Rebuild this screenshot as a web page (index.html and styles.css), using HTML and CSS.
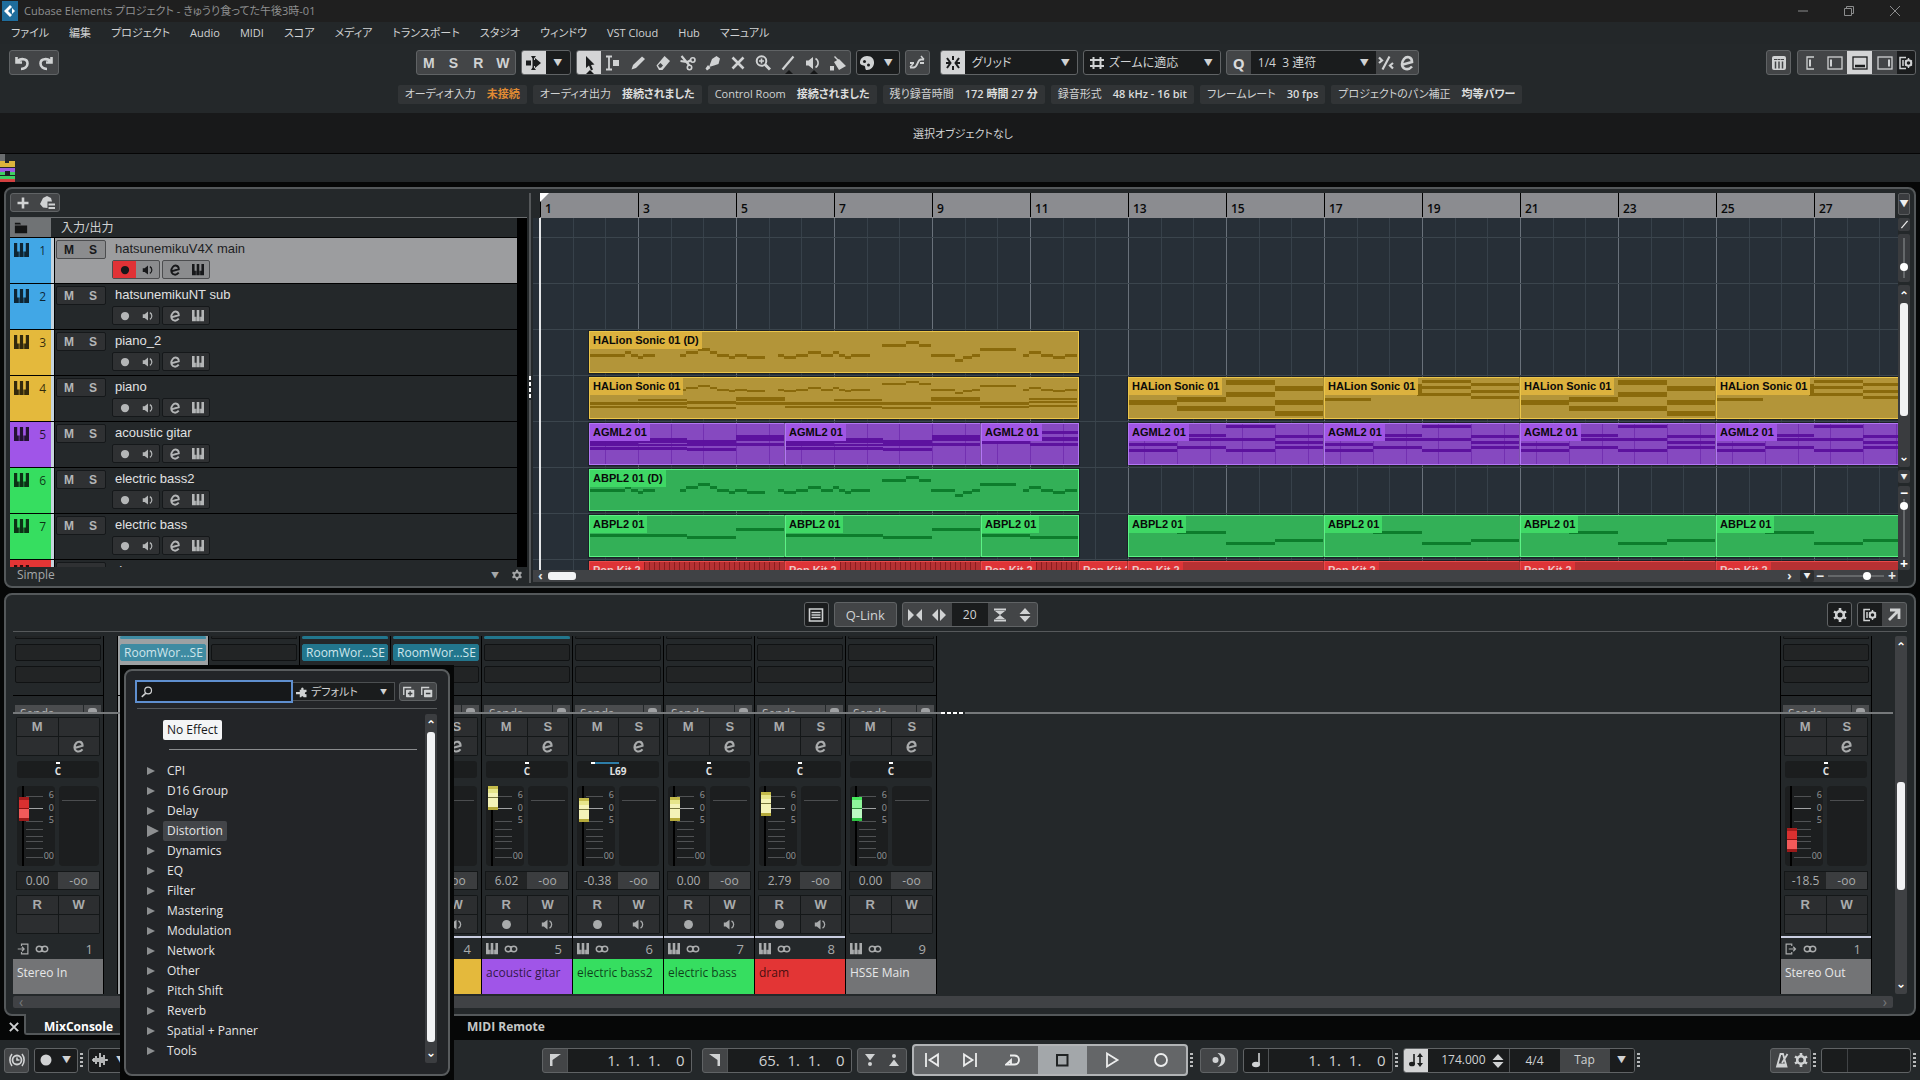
FILE: index.html
```html
<!DOCTYPE html>
<html lang="ja">
<head>
<meta charset="utf-8">
<title>Cubase Elements プロジェクト - きゅうり食ってた午後3時-01</title>
<link rel="stylesheet" href="styles.css">
</head>
<body>
<svg class="sprite" aria-hidden="true">
  <symbol id="i-undo" viewBox="0 0 16 16"><path d="M2.500 2v5.500H8M3 7C6 3 13.500 3 13.500 8.500c0 3.500-3 5.500-6.500 5.500" fill="none" stroke="currentColor" stroke-width="2.600"/></symbol>
  <symbol id="i-redo" viewBox="0 0 16 16"><path d="M13.500 2v5.500H8M13 7C10 3 2.500 3 2.500 8.500c0 3.500 3 5.500 6.500 5.500" fill="none" stroke="currentColor" stroke-width="2.600"/></symbol>
  <symbol id="i-auto" viewBox="0 0 16 16"><path d="M0 5.500h5v5H0zM9 5V3l6 5-6 5v-2H8V5zM5 1h5L8 3.500v9L10 15H5l1.500-2.500v-9z" fill="currentColor"/></symbol>
  <symbol id="i-arrow" viewBox="0 0 16 16"><path d="M5 1v12l3-2.500 2 5 2-1-2-4.500 3.500-.5z" fill="currentColor"/></symbol>
  <symbol id="i-range" viewBox="0 0 16 16"><path d="M1 1.500h6M4 1.500v13M1 14.500h6" stroke="currentColor" stroke-width="1.800" fill="none"/><path d="M8 5h6v6H8z" fill="currentColor"/></symbol>
  <symbol id="i-pencil" viewBox="0 0 16 16"><path d="M1.500 14.500l1.500-4.500L12 1.500l3 2.500L6 13z" fill="currentColor"/></symbol>
  <symbol id="i-eraser" viewBox="0 0 16 16"><path d="M1.500 10.500L9.500 1l5.500 5L7.500 15H4z" fill="currentColor"/><path d="M3 10.500l2.500-2.500 2.500 2.500-2 2.300H4.500z" fill="#434547"/></symbol>
  <symbol id="i-scissors" viewBox="0 0 16 16"><path d="M1.500 1l5 6 3 3.500M.5 6l7 1 3.500-2" fill="none" stroke="currentColor" stroke-width="2.200"/><circle cx="12.800" cy="5" r="2.200" fill="none" stroke="currentColor" stroke-width="1.600"/><circle cx="9.500" cy="12.500" r="2.200" fill="none" stroke="currentColor" stroke-width="1.600"/></symbol>
  <symbol id="i-glue" viewBox="0 0 16 16"><path d="M7 4l4.500-3L15 3.500 13.500 9 9 10.500 4 12zM3 10l2.500 3L2 15.500.5 13.500z" fill="currentColor"/></symbol>
  <symbol id="i-x" viewBox="0 0 16 16"><path d="M2.500 2.500l11 11M13.500 2.500l-11 11" stroke="currentColor" stroke-width="2.600"/></symbol>
  <symbol id="i-zoom" viewBox="0 0 16 16"><circle cx="6.500" cy="6" r="4.800" fill="none" stroke="currentColor" stroke-width="2"/><path d="M10 9.500l5 5" stroke="currentColor" stroke-width="3"/><path d="M4 6h5M6.500 3.500v5" stroke="currentColor" stroke-width="1.600"/></symbol>
  <symbol id="i-line" viewBox="0 0 16 16"><path d="M2.500 14.500L13.500 1.500" stroke="currentColor" stroke-width="2.200"/></symbol>
  <symbol id="i-speaker" viewBox="0 0 16 16"><path d="M1 5.500h2.500L8 2v12l-4.500-3.500H1z" fill="currentColor"/><path d="M10.500 3.500c3.500 2 3.500 7 0 9" stroke="currentColor" stroke-width="1.600" fill="none"/></symbol>
  <symbol id="i-paint" viewBox="0 0 16 16"><path d="M4 7l5-3 7 7-7 4zM0 11h4v4.500H0zM5 1l5 5-1 1-5-5z" fill="currentColor"/></symbol>
  <symbol id="i-palette" viewBox="0 0 16 16"><path d="M8 1c5 0 7.500 3.500 7 7.500-.5 3.500-3 6.500-7 6.500-2 0-1.500-2-2-3.500C6 10 1.500 11 1 8 .7 4 4 1 8 1z" fill="currentColor"/><circle cx="5.500" cy="6.500" r="1.500" fill="#1b1d1e"/><circle cx="9.500" cy="10" r="1.500" fill="#1b1d1e"/></symbol>
  <symbol id="i-cross" viewBox="0 0 16 16"><path d="M1 12.500h3.500C9 12.500 8 4.500 12 4.500h3M1 8h4M11 8h4" fill="none" stroke="currentColor" stroke-width="1.800"/><path d="M12 1l3 3.500M1 12l3-3" stroke="currentColor" stroke-width="1.500"/></symbol>
  <symbol id="i-snap" viewBox="0 0 16 16"><path d="M8 1v4M8 11v4M2 3l3.500 5L2 13M14 3l-3.500 5 3.500 5M1 8h4M11 8h4" fill="none" stroke="currentColor" stroke-width="2"/></symbol>
  <symbol id="i-hash" viewBox="0 0 16 16"><path d="M4.500 2v12M11.500 2v12M1 5h14M1 11h14" stroke="currentColor" stroke-width="2"/></symbol>
  <symbol id="i-iq" viewBox="0 0 16 16"><path d="M4.500 14.500L11.500 1.500M1 2.500L4 5.500 1 8M15 8L12 10.500l3 3" fill="none" stroke="currentColor" stroke-width="2.200"/></symbol>
  <symbol id="i-edit" viewBox="0 0 16 16"><path d="M3 9.800L13 7c0-5.500-5.500-6-8-3s-2.800 7.500.2 9.300 6 .2 7.800-1.800" fill="none" stroke="currentColor" stroke-width="2.600"/></symbol>
  <symbol id="i-keys" viewBox="0 0 14 14"><path d="M0 0h3v8h1.500v5H0zM5.500 0h3v8H9v5H5v-5h.5zM11 0h3v13H9.500V8H11z" fill="currentColor"/></symbol>
  <symbol id="i-mixer" viewBox="0 0 16 16"><rect x="1" y="1" width="14" height="14" rx="2" fill="currentColor"/><path d="M4.500 6.500v7M8 6.500v7M11.500 6.500v7" stroke="#434547" stroke-width="1.500"/><path d="M3 4.500h3M6.500 4.500h3M10 4.500h3" stroke="#434547"/></symbol>
  <symbol id="i-zl0" viewBox="0 0 16 16"><path d="M12 2H5v12h7" fill="none" stroke="currentColor" stroke-width="1.300"/><path d="M8 4.500v7" stroke="currentColor" stroke-width="2"/></symbol>
  <symbol id="i-zl" viewBox="0 0 16 16"><rect x="1" y="2" width="14" height="12" fill="none" stroke="currentColor" stroke-width="1.300"/><path d="M4 4.500v7" stroke="currentColor" stroke-width="2"/></symbol>
  <symbol id="i-zb" viewBox="0 0 16 16"><rect x="1" y="2" width="14" height="12" fill="none" stroke="currentColor" stroke-width="1.300"/><path d="M3 11h10" stroke="currentColor" stroke-width="2.500"/></symbol>
  <symbol id="i-zr" viewBox="0 0 16 16"><rect x="1" y="2" width="14" height="12" fill="none" stroke="currentColor" stroke-width="1.300"/><path d="M12 4.500v7" stroke="currentColor" stroke-width="2"/></symbol>
  <symbol id="i-setup" viewBox="0 0 16 16"><path d="M8 2.500H2v11h6M5 5v6" fill="none" stroke="currentColor" stroke-width="1.500"/><circle cx="10.500" cy="8" r="2.800" fill="none" stroke="currentColor" stroke-width="2"/><path d="M10.500 3v2M10.500 11v2M14 5.500l-1.500 1M14 10.500l-1.500-1M7 5.500l1.500 1M7 10.500l1.500-1" stroke="currentColor" stroke-width="1.400"/></symbol>
  <symbol id="i-gear" viewBox="0 0 16 16"><circle cx="8" cy="8" r="3.800" fill="none" stroke="currentColor" stroke-width="2.600"/><path d="M8 1v3M8 12v3M2 4.500L4.500 6M14 4.500L11.500 6M2 11.500L4.500 10M14 11.500L11.500 10" stroke="currentColor" stroke-width="2.600"/></symbol>
  <symbol id="i-out" viewBox="0 0 16 16"><path d="M4 3h9v9M13 3L3 13" fill="none" stroke="currentColor" stroke-width="2.800"/></symbol>
  <symbol id="i-plus" viewBox="0 0 16 16"><path d="M8 2.500v11M2.500 8h11" stroke="currentColor" stroke-width="2.600"/></symbol>
  <symbol id="i-preset" viewBox="0 0 16 16"><path d="M4 3l4-2 4 2 1 3.500H8.500V13L4 12.500 1 9zM9.500 8.500H16v2H9.500zM9.500 12H16v2H9.500z" fill="currentColor"/></symbol>
  <symbol id="i-folder" viewBox="0 0 16 14"><path d="M1 1h6l1 2H1zM1 4h14v9H1z" fill="currentColor"/></symbol>
  <symbol id="i-list" viewBox="0 0 16 16"><path d="M1.500 2h13v12h-13zM3.500 5.500h9M3.500 8h9M3.500 10.500h9" fill="none" stroke="currentColor" stroke-width="1.600"/></symbol>
  <symbol id="i-narrow" viewBox="0 0 16 16"><path d="M1 2l6 6-6 6zM15 2L9 8l6 6z" fill="currentColor"/></symbol>
  <symbol id="i-wide" viewBox="0 0 16 16"><path d="M7 2L1 8l6 6zM9 2l6 6-6 6z" fill="currentColor"/></symbol>
  <symbol id="i-short" viewBox="0 0 16 16"><path d="M2 1.500h12v2H2zM3 4h10L8 8zM3 12h10L8 8zM2 12.500h12v2H2z" fill="currentColor"/></symbol>
  <symbol id="i-tall" viewBox="0 0 16 16"><path d="M2.500 7L8 1l5.500 6zM2.500 9L8 15l5.500-6z" fill="currentColor"/></symbol>
  <symbol id="i-inf" viewBox="0 0 16 16"><path d="M8 4.500v7M8 8c0-4-6.500-4.500-6.500 0S8 12 8 8zM8 8c0-4 6.500-4.500 6.500 0S8 12 8 8z" fill="none" stroke="currentColor" stroke-width="1.800"/></symbol>
  <symbol id="i-in" viewBox="0 0 16 16"><path d="M6 4V1.500h8.500v13H6V12M1 8h8M6.500 5l3 3-3 3" fill="none" stroke="currentColor" stroke-width="1.600"/></symbol>
  <symbol id="i-outp" viewBox="0 0 16 16"><path d="M9 4V1.500H1.500v13H9V12M5 8h9M11 5l3 3-3 3" fill="none" stroke="currentColor" stroke-width="1.600"/></symbol>
  <symbol id="i-dot" viewBox="0 0 16 16"><circle cx="8" cy="8" r="5.500" fill="currentColor"/></symbol>
  <symbol id="i-search" viewBox="0 0 16 16"><circle cx="9.500" cy="6" r="4.500" fill="none" stroke="currentColor" stroke-width="1.600"/><path d="M6.500 9.500L1 14.500" stroke="currentColor" stroke-width="2"/></symbol>
  <symbol id="i-puzzle" viewBox="0 0 16 16"><path d="M5 5h2c-1-4 4-4 3 0h4v3c-3-1-3 4 0 3v4h-4c0-2-3-2-3 0H5v-4H0V8h5z" fill="currentColor"/></symbol>
  <symbol id="i-expand" viewBox="0 0 16 16"><path d="M1 12V2h10" fill="none" stroke="currentColor" stroke-width="1.800"/><rect x="4" y="5" width="11" height="10" rx="1" fill="currentColor"/><path d="M9.500 7v6M6.500 10h6" stroke="#3b3d3f" stroke-width="1.800"/></symbol>
  <symbol id="i-collapse" viewBox="0 0 16 16"><path d="M1 12V2h10" fill="none" stroke="currentColor" stroke-width="1.800"/><rect x="4" y="5" width="11" height="10" rx="1" fill="currentColor"/><path d="M6.500 10h6" stroke="#3b3d3f" stroke-width="1.800"/></symbol>
  <symbol id="i-clock" viewBox="0 0 16 16"><circle cx="8" cy="8" r="4.500" fill="none" stroke="currentColor" stroke-width="1.800"/><path d="M8 5.500V8h2.500M3 2C.2 5.500.2 10.500 3 14M13 2c2.800 3.500 2.800 8.500 0 12" fill="none" stroke="currentColor" stroke-width="1.600"/></symbol>
  <symbol id="i-wave" viewBox="0 0 16 16"><path d="M0 8h2V6v4M4 4v8M6 6v4M8 1v14M10 5v6M12 3v10M14 7v2M14 8h2" fill="none" stroke="currentColor" stroke-width="1.700"/></symbol>
  <symbol id="i-locl" viewBox="0 0 16 16"><path d="M3 2h11L5.500 8v6H3z" fill="currentColor"/></symbol>
  <symbol id="i-locr" viewBox="0 0 16 16"><path d="M13 2H2l8.500 6v6H13z" fill="currentColor"/></symbol>
  <symbol id="i-pin" viewBox="0 0 16 16"><path d="M3 2h10L8 8.500z" fill="currentColor"/><circle cx="8" cy="12" r="2" fill="currentColor"/></symbol>
  <symbol id="i-pout" viewBox="0 0 16 16"><path d="M3 14h10L8 7.500z" fill="currentColor"/><circle cx="8" cy="4" r="2" fill="currentColor"/></symbol>
  <symbol id="i-prev" viewBox="0 0 16 16"><path d="M2 1v14M14 2.500v11L5.500 8z" fill="none" stroke="currentColor" stroke-width="1.800"/></symbol>
  <symbol id="i-next" viewBox="0 0 16 16"><path d="M14 1v14M2 2.500v11L10.500 8z" fill="none" stroke="currentColor" stroke-width="1.800"/></symbol>
  <symbol id="i-cycle" viewBox="0 0 16 16"><path d="M5 3.500h4.500c6 0 6 9 0 9H1l5-4.500v4" fill="none" stroke="currentColor" stroke-width="1.800"/></symbol>
  <symbol id="i-stop" viewBox="0 0 16 16"><path d="M3 3h10.500v10.500H3z" fill="none" stroke="currentColor" stroke-width="2"/></symbol>
  <symbol id="i-play" viewBox="0 0 16 16"><path d="M3 1.500v13L13.500 8z" fill="none" stroke="currentColor" stroke-width="1.800"/></symbol>
  <symbol id="i-rec" viewBox="0 0 16 16"><circle cx="8" cy="8" r="6" fill="none" stroke="currentColor" stroke-width="1.800"/></symbol>
  <symbol id="i-moon" viewBox="0 0 16 16"><circle cx="4.500" cy="8" r="3" fill="currentColor"/><path d="M6.500 1c10-.5 10.500 13 0 14 5-4 5-10 0-14z" fill="currentColor"/></symbol>
  <symbol id="i-note" viewBox="0 0 16 16"><path d="M11 1v11" stroke="currentColor" stroke-width="1.600"/><ellipse cx="8" cy="12.500" rx="4" ry="2.800" fill="currentColor"/></symbol>
  <symbol id="i-tempo" viewBox="0 0 16 16"><path d="M6 2v10" stroke="currentColor" stroke-width="1.600"/><ellipse cx="4" cy="12" rx="3" ry="2.300" fill="currentColor"/><path d="M12 3v10" stroke="currentColor" stroke-width="1.600"/><path d="M9 5l3-4 3 4zM9 11l3 4 3-4z" fill="currentColor"/></symbol>
  <symbol id="i-metro" viewBox="0 0 16 16"><path d="M6.500 2h2.500L12.500 14.500H3zM8 11l5.500-9" fill="none" stroke="currentColor" stroke-width="1.800"/><path d="M4 11.500h8l.8 3H3z" fill="currentColor"/></symbol>
</svg>

<div class="app">
  <header>
    <div class="titlebar">
      <svg class="logo" viewBox="0 0 16 20"><rect width="16" height="20" fill="#1f6d9c"/><path d="M2 10l6-6 2 2-4 4 4 4-2 2z" fill="#fff"/><path d="M10 7l3 3-3 3z" fill="#fff"/></svg>
      <span class="title">Cubase Elements プロジェクト - きゅうり食ってた午後3時-01</span>
      <button class="win" aria-label="最小化"><svg viewBox="0 0 12 12"><path d="M1 6h10" stroke="currentColor"/></svg></button>
      <button class="win" aria-label="元に戻す"><svg viewBox="0 0 12 12"><path d="M1.500 3.500h7v7h-7zM3.500 3V1.500h7v7H9" fill="none" stroke="currentColor"/></svg></button>
      <button class="win" aria-label="閉じる"><svg viewBox="0 0 12 12"><path d="M1 1l10 10M11 1L1 11" stroke="currentColor"/></svg></button>
    </div>
    <nav class="menubar">
      <a href="#">ファイル</a><a href="#">編集</a><a href="#">プロジェクト</a><a href="#">Audio</a><a href="#">MIDI</a><a href="#">スコア</a><a href="#">メディア</a><a href="#">トランスポート</a><a href="#">スタジオ</a><a href="#">ウィンドウ</a><a href="#">VST Cloud</a><a href="#">Hub</a><a href="#">マニュアル</a>
    </nav>
    <div class="toolbar">
      <div class="group history">
        <button aria-label="Undo"><svg><use href="#i-undo"/></svg></button><button aria-label="Redo"><svg><use href="#i-redo"/></svg></button>
      </div>
      <div class="tools">
        <div class="group letters"><button>M</button><button>S</button><button>R</button><button>W</button></div>
        <div class="group"><button class="on" aria-label="Auto-Scroll"><svg><use href="#i-auto"/></svg></button><button class="dark caret">▼</button></div>
        <div class="group">
          <button class="on sub" aria-label="Select"><svg><use href="#i-arrow"/></svg></button>
          <button aria-label="Range"><svg><use href="#i-range"/></svg></button>
          <button aria-label="Draw"><svg><use href="#i-pencil"/></svg></button>
          <button aria-label="Erase"><svg><use href="#i-eraser"/></svg></button>
          <button aria-label="Split"><svg><use href="#i-scissors"/></svg></button>
          <button aria-label="Glue"><svg><use href="#i-glue"/></svg></button>
          <button aria-label="Mute"><svg><use href="#i-x"/></svg></button>
          <button aria-label="Zoom"><svg><use href="#i-zoom"/></svg></button>
          <button class="sub" aria-label="Line"><svg><use href="#i-line"/></svg></button>
          <button class="sub" aria-label="Play"><svg><use href="#i-speaker"/></svg></button>
          <button aria-label="Color"><svg><use href="#i-paint"/></svg></button>
        </div>
        <div class="group"><button class="dark fit" aria-label="Color Menu"><svg><use href="#i-palette"/></svg></button><button class="dark caret fit">▼</button></div>
        <div class="group"><button aria-label="Crossfade"><svg><use href="#i-cross"/></svg></button></div>
        <div class="group snap"><button class="on" aria-label="Snap"><svg><use href="#i-snap"/></svg></button>
          <span class="drop w112"><select aria-label="Snap Type"><option>グリッド</option></select></span></div>
        <div class="group dark"><svg class="lead"><use href="#i-hash"/></svg><span class="drop w112"><select aria-label="Grid Type"><option>ズームに適応</option></select></span></div>
        <div class="group"><button class="q">Q</button><span class="drop w125"><select aria-label="Quantize Preset"><option>1/4&nbsp; 3 連符</option></select></span><button class="fit" aria-label="Iterative Quantize"><svg><use href="#i-iq"/></svg></button><button class="fit" aria-label="Quantize Panel"><svg><use href="#i-edit"/></svg></button></div>
      </div>
      <div class="zones">
        <div class="group"><button aria-label="MixConsole"><svg><use href="#i-mixer"/></svg></button></div>
        <div class="group"><button aria-label="Left Zone"><svg><use href="#i-zl0"/></svg></button><button aria-label="Inspector"><svg><use href="#i-zl"/></svg></button><button class="on" aria-label="Lower Zone"><svg><use href="#i-zb"/></svg></button><button aria-label="Right Zone"><svg><use href="#i-zr"/></svg></button><button class="dark slim" aria-label="Setup"><svg><use href="#i-setup"/></svg></button></div>
      </div>
    </div>
    <div class="status">
      <p>オーディオ入力<b class="warn">未接続</b></p>
      <p>オーディオ出力<b>接続されました</b></p>
      <p>Control Room<b>接続されました</b></p>
      <p>残り録音時間<b>172 時間 27 分</b></p>
      <p>録音形式<b>48 kHz - 16 bit</b></p>
      <p>フレームレート<b>30 fps</b></p>
      <p>プロジェクトのパン補正<b>均等パワー</b></p>
    </div>
    <div class="infoline">選択オブジェクトなし</div>
    <div class="overview"><svg width="15" height="28" viewBox="0 0 15 28"><path d="M0 0h5v8H0z" fill="#6a6d6f"/><path d="M0 7h5v2h4V7h6v6H0z" fill="#dcb43c"/><path d="M0 14h15v4H0z" fill="#9a5be0"/><path d="M0 18h15v9H0z" fill="#3fcf62"/><path d="M5 17h5v4H5zM0 21h15v1H0z" fill="#1c2023"/><path d="M0 25h15v3H0z" fill="#d24040"/></svg></div>
  </header>

  <main class="panel project">
    <section class="tracklist">
      <div class="tl-head"><div class="group small"><button aria-label="Add Track"><svg><use href="#i-plus"/></svg></button><button aria-label="Track Presets"><svg><use href="#i-preset"/></svg></button></div></div>
      <div class="tl-body">
        <div class="io"><span class="io-icon"><svg><use href="#i-folder"/></svg></span>入力/出力</div>
        <div id="tracks"></div>
      </div>
      <div class="tl-foot"><span>Simple</span><span class="foot-caret">▼</span><svg><use href="#i-gear"/></svg></div>
    </section>
    <div class="vsplit"></div>
    <section class="arrange">
      <div class="ruler" id="ruler"></div>
      <div class="canvas" id="canvas"></div>
      <div class="hbar"><span class="chev">‹</span><span class="thumb"></span><span class="chev end">›</span><button class="mini">▼</button><span class="hzoom"><i>−</i><input type="range" aria-label="Horizontal Zoom" min="0" max="100" value="72"><i>+</i></span></div>
    </section>
    <div class="vbar">
      <button class="mini tall">▼</button>
      <button class="mini" aria-label="Edit"><svg><use href="#i-line"/></svg></button>
      <div class="box wave"><input type="range" class="vert" aria-label="Waveform Zoom" min="0" max="100" value="23"></div>
      <div class="box scroll"><span>⌃</span><i></i><span class="dn">⌃</span></div>
      <button class="mini">▼</button>
      <div class="box vzoom"><b>−</b><input type="range" class="vert" aria-label="Vertical Zoom" min="0" max="100" value="94"><b>+</b></div>
    </div>
  </main>

  <section class="panel mixer">
    <div class="mx-head">
      <div class="group"><button class="dark" aria-label="Channel List"><svg><use href="#i-list"/></svg></button></div>
      <div class="group"><button class="qlink">Q-Link</button></div>
      <div class="group"><button aria-label="Narrower"><svg><use href="#i-narrow"/></svg></button><button aria-label="Wider"><svg><use href="#i-wide"/></svg></button><span class="num">20</span><button aria-label="Shorter"><svg><use href="#i-short"/></svg></button><button aria-label="Taller"><svg><use href="#i-tall"/></svg></button></div>
      <div class="mx-right"><div class="group"><button class="dark" aria-label="Settings"><svg><use href="#i-gear"/></svg></button></div><div class="group"><button class="dark" aria-label="Setup"><svg><use href="#i-setup"/></svg></button><button aria-label="Open Window"><svg><use href="#i-out"/></svg></button></div></div>
    </div>
    <div class="mx-body">
      <div class="channels" id="channels"></div>
      <div class="mx-vscroll"><span>⌃</span><i></i><span class="dn">⌃</span></div>
    </div>
    <div class="mx-hscroll"><span>‹</span><span>›</span></div>
  </section>
  <nav class="tabs">
    <button class="close" aria-label="閉じる"><svg><use href="#i-x"/></svg></button>
    <a href="#" class="tab active">MixConsole</a>
    <a href="#" class="tab">MIDI Remote</a>
  </nav>

  <footer class="transport">
    <div class="t-left">
      <div class="group"><button aria-label="Buffer"><svg><use href="#i-clock"/></svg></button></div>
      <div class="group"><button class="dark fit" aria-label="Record Mode"><svg><use href="#i-dot"/></svg></button><button class="dark caret fit">▼</button></div>
      <span class="dots"></span>
      <div class="group"><button class="dark fit" aria-label="Audio Record"><svg><use href="#i-wave"/></svg></button><button class="dark caret fit">▼</button></div>
    </div>
    <div class="t-mid">
      <div class="group loc"><button aria-label="Left Locator"><svg><use href="#i-locl"/></svg></button><input aria-label="Left Locator Position" value="1.  1.  1.    0"></div>
      <div class="group loc second"><button aria-label="Right Locator"><svg><use href="#i-locr"/></svg></button><input aria-label="Right Locator Position" value="65.  1.  1.    0"></div>
      <div class="group"><button aria-label="Punch In"><svg><use href="#i-pin"/></svg></button><button aria-label="Punch Out"><svg><use href="#i-pout"/></svg></button></div>
      <div class="main-t"><button class="s" aria-label="Previous"><svg><use href="#i-prev"/></svg></button><button class="s" aria-label="Next"><svg><use href="#i-next"/></svg></button><button aria-label="Cycle"><svg><use href="#i-cycle"/></svg></button><button class="stop" aria-label="Stop"><svg><use href="#i-stop"/></svg></button><button aria-label="Start"><svg><use href="#i-play"/></svg></button><button aria-label="Record"><svg><use href="#i-rec"/></svg></button></div>
      <span class="dots"></span>
      <div class="group moon"><button aria-label="Pre-roll"><svg><use href="#i-moon"/></svg></button></div>
      <div class="group loc"><button class="dark" aria-label="Time Format"><svg><use href="#i-note"/></svg></button><input aria-label="Position" value="1.  1.  1.    0"></div>
      <span class="dots"></span>
      <div class="group tempo"><button class="on" aria-label="Tempo Track"><svg><use href="#i-tempo"/></svg></button><input aria-label="Tempo" value="174.000"><span class="step"><svg><use href="#i-tall"/></svg></span><span class="sig">4/4</span><button class="tap">Tap</button><button class="dark caret">▼</button></div>
      <span class="dots"></span>
    </div>
    <div class="t-right">
      <div class="group"><button class="fit" aria-label="Metronome"><svg><use href="#i-metro"/></svg></button><button class="slim" aria-label="Metronome Setup"><svg><use href="#i-gear"/></svg></button></div>
      <span class="dots"></span>
      <div class="group meter"><span></span></div>
      <span class="dots"></span>
    </div>
  </footer>

  <div class="popup">
    <div class="pop-inner">
      <div class="pop-head">
        <label class="search"><svg><use href="#i-search"/></svg><input type="text" aria-label="検索"></label>
        <span class="drop preset"><svg><use href="#i-puzzle"/></svg><select aria-label="コレクション"><option>デフォルト</option></select></span>
        <div class="group small"><button aria-label="展開"><svg><use href="#i-expand"/></svg></button><button aria-label="折りたたむ"><svg><use href="#i-collapse"/></svg></button></div>
      </div>
      <div class="pop-body">
        <div class="pop-list">
          <button class="none">No Effect</button>
          <hr>
          <ul>
            <li><span>CPI</span></li><li><span>D16 Group</span></li><li><span>Delay</span></li><li class="hover"><span>Distortion</span></li><li><span>Dynamics</span></li><li><span>EQ</span></li><li><span>Filter</span></li><li><span>Mastering</span></li><li><span>Modulation</span></li><li><span>Network</span></li><li><span>Other</span></li><li><span>Pitch Shift</span></li><li><span>Reverb</span></li><li><span>Spatial + Panner</span></li><li><span>Tools</span></li>
          </ul>
        </div>
        <div class="pop-scroll"><span>⌃</span><i></i><span class="dn">⌃</span></div>
      </div>
    </div>
  </div>
</div>
<script src="script.js"></script>
</body>
</html>
```

FILE: styles.css
```css
* { box-sizing: border-box; }
html, body { margin: 0; height: 100%; }
body {
  background: #060707;
  color: #d0d2d3;
  font: 12px/16px "Open Sans", "Noto Sans CJK JP", sans-serif;
  font-feature-settings: "palt";
  overflow: hidden;
}
button, input, select { font: inherit; font-feature-settings: inherit; color: inherit; background: none; border: 0; padding: 0; margin: 0; outline: 0; }
a { color: inherit; text-decoration: none; }
p, ul { margin: 0; padding: 0; }
i { font-style: normal; }
svg { display: block; width: 16px; height: 16px; flex: none; }
.sprite { position: absolute; width: 0; height: 0; }

.app { position: relative; height: 100vh; display: flex; flex-direction: column; }

/* title and menu */
.titlebar { display: flex; align-items: center; height: 22px; background: #1f1f1f; padding: 0 2px; color: #8e8f90; }
.logo { width: 16px; height: 20px; }
.title { flex: 1; margin-left: 6px; font-size: 11px; }
.win { width: 46px; display: flex; justify-content: center; color: #8b8c8d; }
.win svg { width: 12px; height: 12px; }
.menubar { display: flex; align-items: center; gap: 20px; height: 22px; padding: 0 11px; background: #232729; font-size: 11px; }

/* shared button groups */
.group { display: flex; height: 25px; border: 1px solid #606365; border-radius: 3px; background: #434547; overflow: hidden; flex: none; }
.group.small { height: 19px; }
.group button { width: 25px; display: flex; align-items: center; justify-content: center; position: relative; }
.group > button:first-child, .group > button:last-child { width: 24px; }
.group button:only-child { width: 23px; }
.group button.fit { width: 21px; }
.group button.slim { width: 18px; }
.group svg { width: 16px; height: 16px; }
.group .dark, .group.dark { background: #1a1c1d; }
.group .on { background: #d3d4d5; color: #1b1d1e; }
.caret, .group button.caret { font-size: 9px; }
.sub::after { content: ""; position: absolute; bottom: 0; left: 9px; border: 4px solid transparent; border-top: 0; border-bottom-color: #151617; }
.letters { font: bold 14px/16px "Liberation Sans", sans-serif; }
.drop { display: flex; align-items: center; position: relative; background: #1a1c1d; }
.drop select { appearance: none; width: 100%; height: 100%; padding: 0 22px 0 7px; font-size: 12px; }
.drop::after { content: "▼"; position: absolute; right: 7px; font-size: 9px; pointer-events: none; }
.w112 { width: 112px; }
.w125 { width: 125px; }
.lead { margin: 4px 0 4px 5px; }
.lead + .drop { width: 115px; }
.lead + .drop select { padding-left: 4px; }

.toolbar { display: grid; grid-template-columns: 9fr auto 11fr; padding: 6px 4px 6px 9px; background: #24282a; }
.toolbar > .history { width: 50px; }
.tools { display: flex; gap: 5px; }
.snap { margin-left: 5px; }
.group button.q { font: bold 15px/16px "Open Sans", sans-serif; color: #d9dadb; }
.zones { display: flex; gap: 6px; justify-content: flex-end; }

.status { display: flex; justify-content: center; gap: 6px; height: 32px; padding-top: 4px; background: #24282a; font-size: 11px; }
.status p { height: 19px; line-height: 18px; background: #313436; padding: 0 7px; border-radius: 2px; white-space: nowrap; }
.status b { margin-left: 11px; font-weight: 600; color: #dcdddd; }
.status .warn { color: #e08a33; }
.infoline { height: 41px; line-height: 41px; text-align: center; background: #18191a; border-bottom: 1px solid #050505; font-size: 11px; padding-left: 6px; }
.overview { height: 28px; background: #24282a; margin-bottom: 5px; }
.overview svg { width: 15px; height: 28px; }

.panel { margin: 0 4px; border: 2px solid #54585a; border-radius: 8px; background: #24282a; }

/* project zone */
.project { flex: 1; min-height: 0; display: flex; padding: 4px 4px 3px 4px; margin-bottom: 5px; }
.tracklist { width: 517px; display: flex; flex-direction: column; min-height: 0; }
.tl-head { height: 25px; border-bottom: 1px solid #6b6e70; flex: none; }
.tl-head .group { width: 50px; }
.tl-body { flex: 1; min-height: 0; overflow: hidden; border-right: 10px solid #000; }
.io { display: flex; height: 20px; border-bottom: 1px solid #000; line-height: 19px; }
.io-icon { width: 41px; padding: 3px 4px; margin-right: 10px; background: #707375; color: #141515; }
.io-icon svg { width: 14px; height: 14px; }
.track { display: flex; height: 46px; border-bottom: 1px solid #000; }
.strip { width: 44px; border-right: 3px solid #c5d3dc; padding: 5px 5px 0 4px; display: flex; justify-content: space-between; color: rgba(0,0,0,.78); }
.strip svg { width: 15px; height: 15px; }
.track-main { flex: 1; border-left: 1px solid #000; display: grid; grid-template-columns: 59px auto 1fr; grid-template-rows: 20px 20px; align-content: start; padding: 2px 0 0 1px; }
.tname { grid-column: 2 / 4; font: 13px/18px "Liberation Sans", sans-serif; color: #e0e1e2; }
.pair { display: flex; width: 50px; height: 19px; border: 1px solid #15181a; border-radius: 2px; background: #2f3133; }
.pair button { flex: 1; display: flex; align-items: center; justify-content: center; font: bold 12px/16px "Liberation Sans", sans-serif; color: #b4b6b7; }
.pair svg { width: 12px; height: 12px; }
.pairs { grid-column: 2; display: flex; gap: 2px; margin-left: -3px; }
.pairs .pair { width: 48px; }
.track.sel .track-main { background: #9c9d9f; }
.track.sel .tname { color: #1d1e1f; }
.track.sel .pair { background: #8b8c8e; border-color: #4c4d4f; }
.track.sel .pair button { color: #17181a; }
.track.sel .armed { background: #e03236; }
.tl-foot { height: 16px; display: flex; align-items: center; padding: 0 4px 0 7px; gap: 12px; color: #a5a7a8; flex: none; }
.tl-foot span:first-child { flex: 1; }
.tl-foot svg { width: 12px; height: 12px; }
.foot-caret { font-size: 8px; }
.vsplit { width: 4px; border-right: 2px solid #55585a; margin-right: 2px; display: flex; align-items: center; position: relative; }
.vsplit::after { content: ""; position: absolute; right: -2px; width: 2px; height: 24px; background: repeating-linear-gradient(#fff 0 4px, #24282a 4px 6px); }
.arrange { flex: 1; min-width: 0; display: flex; flex-direction: column; }
.ruler { position: relative; height: 25px; margin-left: 7px; margin-right: 3px; overflow: hidden; background: #8b8c90; flex: none; }
.ruler span { position: absolute; bottom: 1px; height: 24px; border-left: 1px solid #000; padding: 8px 0 0 4px; color: #08090a; font-weight: 600; }
.ruler::before { content: ""; position: absolute; z-index: 1; border-top: 9px solid #fff; border-right: 9px solid transparent; }
.canvas { position: relative; flex: 1; overflow: hidden; background: repeating-linear-gradient(#0000 0 19px, #3b454d 19px 20px, #0000 20px 46px) 0 0 / 100% 46px, linear-gradient(90deg, #69717a 1px, #0000 1px 33px, #37414a 33px 34px, #0000 34px 65px, #37414a 65px 66px, #0000 66px) 7px 0 / 98px 100%, #272f37; }
.canvas::before { content: ""; position: absolute; z-index: 2; left: 6px; top: 0; bottom: 0; width: 2px; background: #e4e6e8; }
.clip { position: absolute; height: 42px; border: 1px solid; overflow: hidden; box-shadow: 0 0 0 1px rgba(0,0,0,.3); }
.clip svg { position: absolute; inset: -1px; width: 600px; height: 42px; }
.clip span { position: relative; display: inline-block; height: 17px; padding: 0 3px; font: bold 11px/17px "Liberation Sans", sans-serif; color: #0a0a0a; white-space: nowrap; }
.gold { background: #b39539; border-color: #ecc64a; color: #8a6a0c; }
.gold span { background: #dcb23e; }
.purple { background: #8649c0; border-color: #b377f4; color: #5d129f; }
.purple span { background: #a055e4; }
.purple .beat { opacity: .45; }
.green { background: #33b057; border-color: #5bf385; color: #0d7d2c; }
.green span { background: #3fd865; }
.red { background: #b73133; border-color: #ea4a4a; color: #8d1c1e; }
.clip.red span { background: #de3437; color: #eec6c6; }
.hbar { height: 12px; margin-bottom: 1px; display: flex; align-items: center; background: #404245; color: #e6e7e8; flex: none; }
.chev { width: 15px; text-align: center; font-weight: bold; line-height: 10px; }
.thumb { width: 28px; height: 8px; border-radius: 3px; background: #f2f3f4; }
.chev.end { margin-left: auto; }
.mini { height: 13px; width: 12px; display: flex; align-items: center; justify-content: center; background: #3a3c3f; border-radius: 2px; font-size: 7px; color: #eee; flex: none; }
.mini svg { width: 9px; height: 9px; }
.hbar .mini { margin-left: 3px; width: 14px; height: 12px; background: #2c2e30; }
.hzoom { display: flex; align-items: center; width: 84px; font-weight: bold; font-size: 14px; line-height: 12px; padding: 0 2px; gap: 4px; }
.hzoom input { flex: 1; min-width: 0; }
input[type=range] { appearance: none; background: linear-gradient(#65686a, #65686a) center / 100% 2px no-repeat; height: 9px; }
input[type=range]::-webkit-slider-thumb { appearance: none; width: 8px; height: 8px; border-radius: 4px; background: #fff; }
input.vert { writing-mode: vertical-lr; direction: rtl; width: 9px; height: auto; background: linear-gradient(#65686a, #65686a) center / 2px 100% no-repeat; }
.vbar { width: 12px; display: flex; flex-direction: column; gap: 3px; padding-bottom: 13px; }
.mini.tall { height: 22px; border: 1px solid #5a5c5e; font-size: 9px; }
.box { background: #3a3c3f; border-radius: 2px; display: flex; flex-direction: column; align-items: center; }
.box.wave { height: 48px; padding: 4px 0; }
.box.scroll { flex: 1; min-height: 0; }
.box.vzoom { height: 84px; line-height: 13px; font-size: 14px; color: #fff; }
.box input { flex: 1; min-height: 0; }
.scroll i, .mx-vscroll i, .pop-scroll i { width: 8px; border-radius: 3px; background: #f1f2f4; }
.scroll i { height: 62%; }
.scroll span, .mx-vscroll span, .pop-scroll span { height: 18px; font: bold 12px/22px "DejaVu Sans", sans-serif; color: #fff; }
.scroll .dn, .mx-vscroll .dn, .pop-scroll .dn { transform: rotate(180deg); margin-top: auto; }

/* mix console */
.mixer { padding: 7px 7px 6px; }
.mx-head { display: flex; gap: 5px; height: 30px; padding-left: 41.75%; border-bottom: 1px solid #56595b; }
.mx-right { display: flex; gap: 5px; margin-left: auto; }
.group button.qlink { width: 61px; font-size: 13px; }
.num { width: 36px; background: #1a1c1d; text-align: center; line-height: 23px; font-size: 12px; }
.mx-body { display: flex; gap: 2px; margin-top: 4px; height: 358px; }
.channels { position: relative; flex: 1; min-width: 0; display: flex; overflow: hidden; }
.channels::before { content: ""; position: absolute; left: 0; right: 0; top: 76px; height: 2px; background: #76797b; z-index: 2; }
.channels::after { content: ""; position: absolute; left: 50%; margin-left: -12px; top: 76px; width: 24px; height: 2px; background: repeating-linear-gradient(90deg, #fff 0 4px, #24282a 4px 6px); z-index: 3; }
.mx-vscroll { width: 12px; background: #3f4144; border-radius: 2px; display: flex; flex-direction: column; align-items: center; }
.mx-vscroll i { height: 108px; margin-top: 128px; }
.ch { width: 91px; flex: none; border-right: 1px solid #000; display: flex; flex-direction: column; background: #24282a; }
.ch.first { margin-right: 13px; }
.ch.lead-edge { border-left: 1px solid #000; width: 92px; }
.ch.last { margin-left: auto; margin-right: 21px; border-left: 1px solid #000; width: 92px; }
.ch.sel { background: #9da1a3; }
.inserts { height: 60px; padding: 0 2px; border-bottom: 1px solid #000; flex: none; }
.slot { height: 17px; margin-bottom: 5px; border: 1px solid #101213; border-radius: 2px; background: #222425; padding: 0 3px; line-height: 16px; color: #cfe6ec; white-space: nowrap; overflow: hidden; }
.slot.cut { height: 3px; border-top: 0; }
.slot.fx { background: #22768d; border-color: #22768d; }
.ch.sel .slot.fx { background: #3f8ba2; border-color: #3f8ba2; }
.sends { height: 7px; margin: 9px 2px 5px; display: flex; gap: 1px; overflow: hidden; flex: none; }
.sends span { background: #4a4c4e; padding-left: 5px; flex: 1; line-height: 18px; color: #b4b6b7; }
.sends i { width: 17px; background: #4a4c4e; padding: 3px 4px 0; }
.sends i::before { content: ""; display: block; height: 8px; border-radius: 3px; background: #9fa1a3; }
.cells { display: grid; grid-template-columns: 1fr 1fr; grid-auto-rows: 18px; gap: 1px; height: 39px; margin: 0 3px; padding: 1px; background: #141718; border-radius: 2px; flex: none; }
.cells button, .cells span { background: #2c2e30; display: flex; align-items: center; justify-content: center; font: bold 13px/16px "Liberation Sans", sans-serif; color: #a9abac; }
.cells svg { width: 13px; height: 13px; }
.pan { height: 17px; margin: 5px 4px 8px; border-radius: 3px; background: #1b1d1e; text-align: center; font: bold 10px/20px "Open Sans", sans-serif; color: #e0e1e2; position: relative; flex: none; }
.pan::before { content: ""; position: absolute; top: 1px; left: 50%; margin-left: -2px; width: 4px; height: 2px; background: #fff; }
.pan.left::before { left: 14px; margin: 0; width: 28px; background: linear-gradient(90deg, #fff 4px, #2d7da8 4px); }
.fader { display: flex; gap: 4px; height: 80px; margin: 0 4px 5px; flex: none; }
.fbox { position: relative; width: 38px; background: #1c1e1f; border-radius: 4px; }
.fbox svg { position: absolute; left: 9px; top: 0; width: 18px; height: 80px; }
.fbox i { position: absolute; right: 1px; font-size: 9px; line-height: 10px; color: #97999a; }
.lv6 { top: 4px; } .lv0 { top: 17px; } .lv5 { top: 29px; } .lvi { top: 65px; }
.fmeter { flex: 1; background: #1c1e1f; border-radius: 4px; padding: 14px 3px; }
.fmeter::before { content: ""; display: block; border-top: 1px solid #4b4d4f; }
.fbox input { position: absolute; left: 2px; top: 0; width: 10px; height: 80px; background: linear-gradient(#000, #000) 3px 0 / 2px 100% no-repeat; }
.fbox input::-webkit-slider-thumb { width: 10px; height: 24px; border-radius: 0; background: linear-gradient(#c4bb4a 0 3px, #e6e58a 3px 7px, #f4f3b8 7px 11px, #77763c 11px 12px, #f4f3b8 12px 21px, #b5aa3a 21px); }
.fbox input.redcap::-webkit-slider-thumb { background: linear-gradient(#a51c1c 0 3px, #d93030 3px 11px, #8b1010 11px 12px, #f25a5a 12px 21px, #9c1a1a 21px); }
.fbox input.greencap::-webkit-slider-thumb { background: linear-gradient(#46e85c 0 3px, #8ff59b 3px 11px, #2c8a38 11px 12px, #bdf9c3 12px 21px, #2ec643 21px); }
.vals { display: flex; height: 19px; margin: 0 3px 5px; border: 1px solid #141718; text-align: center; line-height: 17px; color: #a9abac; flex: none; }
.vals span { flex: 1; background: #222425; }
.vals span + span { background: #3b3d3f; }
.chrow { height: 23px; margin-top: 2px; display: flex; align-items: center; gap: 6px; padding: 2px 10px 2px 4px; border-top: 2px solid transparent; color: #a9abac; flex: none; }
.chrow.lit { border-top-color: #c9cde0; }
.chrow svg { width: 12px; height: 12px; }
.chrow svg + svg { width: 14px; height: 14px; }
.chrow b { margin-left: auto; font-weight: 400; font-size: 13px; }
.chname { flex: 1; padding: 6px 0 6px 4px; background: #737476; color: #e6e7e8; font-size: 12px; white-space: nowrap; overflow: hidden; }
.chname.c { color: rgba(0,0,0,.72); }
.rest { flex: 1; }
.mx-hscroll { display: flex; justify-content: space-between; height: 12px; margin: 2px 14px 0 0; background: #404245; border-radius: 2px; line-height: 11px; padding: 0 6px; color: #77797b; font-size: 14px; }

.tabs { height: 24px; display: flex; padding-left: 4px; flex: none; }
.close { width: 20px; display: flex; align-items: center; justify-content: center; padding-bottom: 2px; }
.close svg { width: 12px; height: 12px; }
.tab { font-weight: 700; line-height: 22px; color: #c5c7c8; }
.tab.active { width: 422px; margin: -2px 21px 5px 0; padding-left: 18px; background: #24282a; border: solid #54585a; border-width: 0 0 2px 2px; border-radius: 0 0 0 3px; color: #fff; line-height: 26px; }

/* transport */
.transport { height: 40px; flex: none; display: grid; grid-template-columns: 35fr auto 18fr; padding: 0 4px; background: #24282a; align-items: center; }
.t-left, .t-mid, .t-right { display: flex; align-items: center; gap: 5px; }
.t-right { justify-content: flex-end; }
.dots { width: 3px; height: 15px; margin: 0 0 0 -3px; background: repeating-linear-gradient(#b9bbbc 0 2px, #0000 2px 4px); flex: none; }
.loc { width: 150px; }
.loc.second { margin-left: 5px; }
.loc input { flex: 1; min-width: 0; background: #1a1c1d; text-align: right; padding-right: 6px; font-size: 15px; border-left: 1px solid #505355; white-space: pre; }
.main-t { display: flex; height: 32px; width: 276px; border: 2px solid #b2b4b6; border-radius: 4px; background: #646668; color: #eceded; overflow: hidden; }
.main-t button { flex: 50; display: flex; align-items: center; justify-content: center; }
.main-t .s { flex: 38; }
.main-t .stop { background: #a3a7aa; color: #202324; }
.moon { margin-left: 2px; }
.moon button:only-child { width: 36px; }
.tempo { width: 232px; background: #1a1c1d; }
.tempo input { width: 58px; text-align: right; font-size: 12px; }
.step { width: 24px; padding: 4px; border-right: 1px solid #505355; }
.sig { flex: 1; text-align: center; line-height: 23px; font-size: 12px; }
.tempo button.tap { width: 50px; background: #434547; font-size: 12px; }
.meter { width: 90px; background: #1a1c1d; }
.meter span { width: 26px; border-right: 1px solid #404346; }

/* effect selector */
.popup { position: absolute; z-index: 10; left: 120px; bottom: 0; width: 334px; height: 415px; padding: 4px; background: #060707; }
.pop-inner { height: 407px; border: 2px solid #595c5e; border-radius: 8px; background: #232528; padding: 9px 11px 11px 9px; display: flex; flex-direction: column; }
.pop-head { display: flex; align-items: center; height: 28px; padding-bottom: 5px; }
.search { display: flex; align-items: center; width: 158px; height: 23px; border: 2px solid #5f8fcf; background: #16181a; padding: 0 4px; }
.search svg { width: 12px; height: 12px; }
.search input { width: 130px; }
.preset { flex: 1; height: 19px; border: 1px solid #4c4f51; border-left: 0; padding-left: 3px; margin-right: 4px; }
.preset svg { width: 12px; height: 12px; }
.preset select { padding-left: 3px; font-size: 11px; }
.preset::after { font-size: 7px; }
.pop-head .group { width: 38px; }
.pop-head .group button { width: 18px; }
.pop-head .group svg { width: 12px; height: 12px; }
.pop-body { flex: 1; display: flex; justify-content: space-between; margin-left: 2px; border-top: 1px solid #56595b; padding-top: 5px; min-height: 0; }
.pop-list { width: 280px; color: #e3e4e5; }
.none { margin: 6px 0 0 26px; height: 20px; padding: 0 4px; background: #f4f5f6; color: #17181a; border-radius: 2px; }
.pop-list hr { margin: 9px 0 11px 32px; border: 0; border-top: 1px solid #8a8c8e; }
.pop-list ul { list-style: none; }
.pop-list li { height: 20px; display: flex; align-items: center; position: relative; padding-left: 26px; }
.pop-list li::before { content: ""; position: absolute; left: 10px; top: 6px; border: 4px solid transparent; border-left: 8px solid #8d8f91; border-right: 0; }
.pop-list li.hover::before { top: 4px; border-width: 6px 0 6px 12px; }
.pop-list li span { line-height: 20px; padding: 0 4px; border-radius: 2px; }
.pop-list li.hover span { background: #434549; }
.pop-scroll { width: 12px; background: #3b3d40; border-radius: 2px; display: flex; flex-direction: column; align-items: center; }
.pop-scroll i { height: 310px; }
```

FILE: script.js
```js
const icon = (id) => `<svg><use href="#i-${id}"/></svg>`;

/* track list */
const tracks = [
  ['hatsunemikuV4X main', '#41a7e6'], ['hatsunemikuNT sub', '#41a7e6'],
  ['piano_2', '#e4b93c'], ['piano', '#e4b93c'], ['acoustic gitar', '#a055e8'],
  ['electric bass2', '#36de60'], ['electric bass', '#36de60'], ['dram', '#e33535'],
];
document.getElementById('tracks').innerHTML = tracks.map(([name, color], i) => `
  <div class="track${i ? '' : ' sel'}">
    <div class="strip" style="background:${color}">${icon('keys')}<span>${i + 1}</span></div>
    <div class="track-main">
      <div class="pair"><button>M</button><button>S</button></div>
      <div class="tname">${name}</div>
      <div class="pairs">
        <div class="pair"><button class="armed" aria-label="Record Enable">${icon('dot')}</button><button aria-label="Monitor">${icon('speaker')}</button></div>
        <div class="pair"><button aria-label="Edit Channel">${icon('edit')}</button><button aria-label="Edit Instrument">${icon('keys')}</button></div>
      </div>
    </div>
  </div>`).join('');

/* ruler and clips: one bar is 49 px */
const BAR = 49;
let marks = '';
for (let b = 1; b < 29; b += 2) marks += `<span style="left:${(b - 1) * BAR}px">${b}</span>`;
document.getElementById('ruler').innerHTML = marks;

/* notes are [from, to, top, height] in px inside the clip */
const melody = [[1,36,23],[36,42,20],[42,49,23],[49,54,25],[54,66,23],[91,97,23],[97,109,20],[109,121,17],[121,128,20],[128,140,23],[140,146,25],[146,158,23],[158,176,25],[189,195,23],[195,207,25],[207,219,23],[219,232,20],[232,244,23],[244,250,20],[250,256,23],[256,262,25],[262,281,23],[293,317,13],[317,330,10],[330,342,13],[342,366,23],[366,374,28],[374,383,25],[383,391,23],[391,427,17],[434,440,23],[440,452,20],[452,464,23],[464,476,25],[476,488,23]].map(n => [...n, 3]);
const shift = (notes, dy) => notes.map(([a, b, y, h]) => [a, b, y + dy, h]);
const small = melody.map(([a, b, y]) => [a, b, Math.round(12 + (y - 23) * 0.6), 2]);
const chords = [[1,49,25,3],[1,98,29,2],[49,98,22,2],[49,98,25,3],[98,147,24,3],[98,147,30,2],[147,196,20,4],[147,196,25,3],[196,245,25,3],[196,293,29,2],[245,293,22,2],[245,293,25,3],[293,342,25,3],[293,342,30,2],[342,391,20,4],[342,391,25,3],[391,440,25,3],[391,440,29,2],[440,488,21,2],[440,488,24,2],[440,488,28,2]];
const pianoA = [[1,49,23,5],[49,98,20,5],[49,147,29,5],[98,147,3,5],[98,147,15,5],[147,196,9,5],[147,196,23,5],[147,196,34,5]];
const pianoB = [[1,47,21,3],[93,98,7,12],[98,147,3,3],[98,147,9,3],[98,147,16,3],[147,196,6,3],[147,196,13,3],[147,196,19,3]];
const gtrA = [[1,49,18,5],[1,98,24,3],[49,98,15,3],[49,98,18,2],[49,98,21,2],[98,147,17,6],[98,147,25,3],[147,196,12,6],[147,196,20,3]];
const gtrB = [[1,49,18,3],[49,98,8,3],[49,98,14,4],[49,98,20,3]];
const gtrC = [[1,49,20,3],[1,49,26,3],[49,98,11,3],[49,98,15,3],[49,98,23,3],[98,147,2,3],[98,147,15,3],[98,147,26,3],[147,196,12,3],[147,196,18,3],[147,196,23,3]];
const bassA = [[1,98,19,3],[98,147,21,3],[147,196,13,3]];
const bassC = [[49,98,16,3],[98,147,27,3],[147,196,24,3]];
const hits = Array.from({ length: 30 }, (_, i) => [50 + i * 5, 51 + i * 5, 1, 12]);
/* thin lines on the grid divisions */
const beats = [16, 49, 82, 114, 147, 180].map(x => [x, x + 1, 1, 40, 'beat']);

/* [track row, first bar, last bar, colour, label, notes] */
const clips = [
  [3, 2, 12, 'gold', 'HALion Sonic 01 (D)', melody],
  [4, 2, 12, 'gold', 'HALion Sonic 01', small.concat(chords)],
  [4, 13, 17, 'gold', 'HALion Sonic 01', pianoA], [4, 17, 21, 'gold', 'HALion Sonic 01', pianoB],
  [4, 21, 25, 'gold', 'HALion Sonic 01', pianoA], [4, 25, 29, 'gold', 'HALion Sonic 01', pianoB],
  [5, 2, 6, 'purple', 'AGML2 01', gtrA.concat(beats)], [5, 6, 10, 'purple', 'AGML2 01', gtrA.concat(beats)], [5, 10, 12, 'purple', 'AGML2 01', gtrB.concat(beats)],
  ...[13, 17, 21, 25].map(b => [5, b, b + 4, 'purple', 'AGML2 01', gtrC.concat(beats)]),
  [6, 2, 12, 'green', 'ABPL2 01 (D)', shift(melody, -3)],
  [7, 2, 6, 'green', 'ABPL2 01', bassA], [7, 6, 10, 'green', 'ABPL2 01', bassA], [7, 10, 12, 'green', 'ABPL2 01', [[1,49,19,3],[49,98,21,3]]],
  ...[13, 17, 21, 25].map(b => [7, b, b + 4, 'green', 'ABPL2 01', bassC]),
  [8, 2, 6, 'red', 'Pop Kit 2', hits], [8, 6, 10, 'red', 'Pop Kit 2', hits], [8, 10, 12, 'red', 'Pop Kit 2', hits], [8, 12, 13, 'red', 'Pop Kit 2', []],
  ...[13, 17, 21, 25].map(b => [8, b, b + 4, 'red', 'Pop Kit 2', []]),
];
document.getElementById('canvas').innerHTML = clips.map(([row, from, to, cls, label, notes]) => `
  <div class="clip ${cls}" style="left:${7 + (from - 1) * BAR}px;width:${(to - from) * BAR}px;top:${21 + (row - 1) * 46}px">
    <svg>${notes.map(([a, b, y, h, k]) => `<rect x="${a}" y="${y}" width="${b - a}" height="${h}" fill="currentColor"${k ? ` class="${k}"` : ''}/>`).join('')}</svg>
    <span>${label}</span>
  </div>`).join('');

const fx = 'RoomWor...SE';
const channels = [
  { name: 'Stereo In', no: 1, cap: 'redcap', pos: 80, val: '0.00', io: 'in', cls: 'first' },
  { brief: 1, cut: 1, fx, cls: 'sel lead-edge' },
  { brief: 1 },
  { brief: 1, cut: 1, fx },
  { name: '', no: 4, color: '#e4b93c', cut: 1, fx, pos: 80, val: '', mon: 1, pan: ' ' },
  { name: 'acoustic gitar', no: 5, color: '#a055e8', cut: 1, pos: 100, val: '6.02', mon: 1 },
  { name: 'electric bass2', no: 6, color: '#36de60', pos: 78, val: '-0.38', mon: 1, pan: 'L69' },
  { name: 'electric bass', no: 7, color: '#36de60', pos: 80, val: '0.00', mon: 1 },
  { name: 'dram', no: 8, color: '#e33535', pos: 89, val: '2.79', mon: 1 },
  { name: 'HSSE Main', no: 9, cap: 'greencap', pos: 80, val: '0.00', solo: 1 },
  { name: 'Stereo Out', no: 1, cap: 'redcap', pos: 25, val: '-18.5', io: 'outp', solo: 1, lit: 1, cls: 'last' },
];
const ticks = [10, 22, 35, 43, 50, 55, 62, 71];
const strip = c => `
    <div class="sends"><span>Sends</span><i></i></div>
    <div class="cells"><button>M</button>${c.mon || c.solo ? '<button>S</button>' : '<span></span>'}<span></span><button aria-label="Edit Channel">${icon('edit')}</button></div>
    <div class="pan${c.pan === 'L69' ? ' left' : ''}">${c.pan || 'C'}</div>
    <div class="fader">
      <div class="fbox"><svg>${ticks.map((y, i) => `<path d="M0 ${y}.500h17" stroke="${i === 1 ? '#a0a2a3' : '#505254'}"/>`).join('')}</svg>
        <i class="lv6">6</i><i class="lv0">0</i><i class="lv5">5</i><i class="lvi">00</i>
        <input type="range" class="vert ${c.cap || ''}" aria-label="Level ${c.name}" min="0" max="100" value="${c.pos}"></div>
      <div class="fmeter"></div>
    </div>
    <div class="vals"><span>${c.val}</span><span>-oo</span></div>
    <div class="cells"><button>R</button><button>W</button>${c.mon ? `<button aria-label="Record Enable">${icon('dot')}</button><button aria-label="Monitor">${icon('speaker')}</button>` : '<span></span><span></span>'}</div>
    <div class="chrow${c.mon || c.lit ? ' lit' : ''}">${icon(c.io || 'keys')}${icon('inf')}<b>${c.no}</b></div>
    <div class="chname${c.color ? ' c' : ''}"${c.color ? ` style="background:${c.color}"` : ''}>${c.name}</div>`;
document.getElementById('channels').innerHTML = channels.map(c => `
  <div class="ch ${c.cls || ''}">
    <div class="inserts"><div class="slot cut${c.cut ? ' fx' : ''}"></div><div class="slot${c.fx ? ' fx' : ''}">${c.fx || ''}</div><div class="slot"></div></div>
    ${c.brief ? '<div class="rest"></div>' : strip(c)}
  </div>`).join('');
```
